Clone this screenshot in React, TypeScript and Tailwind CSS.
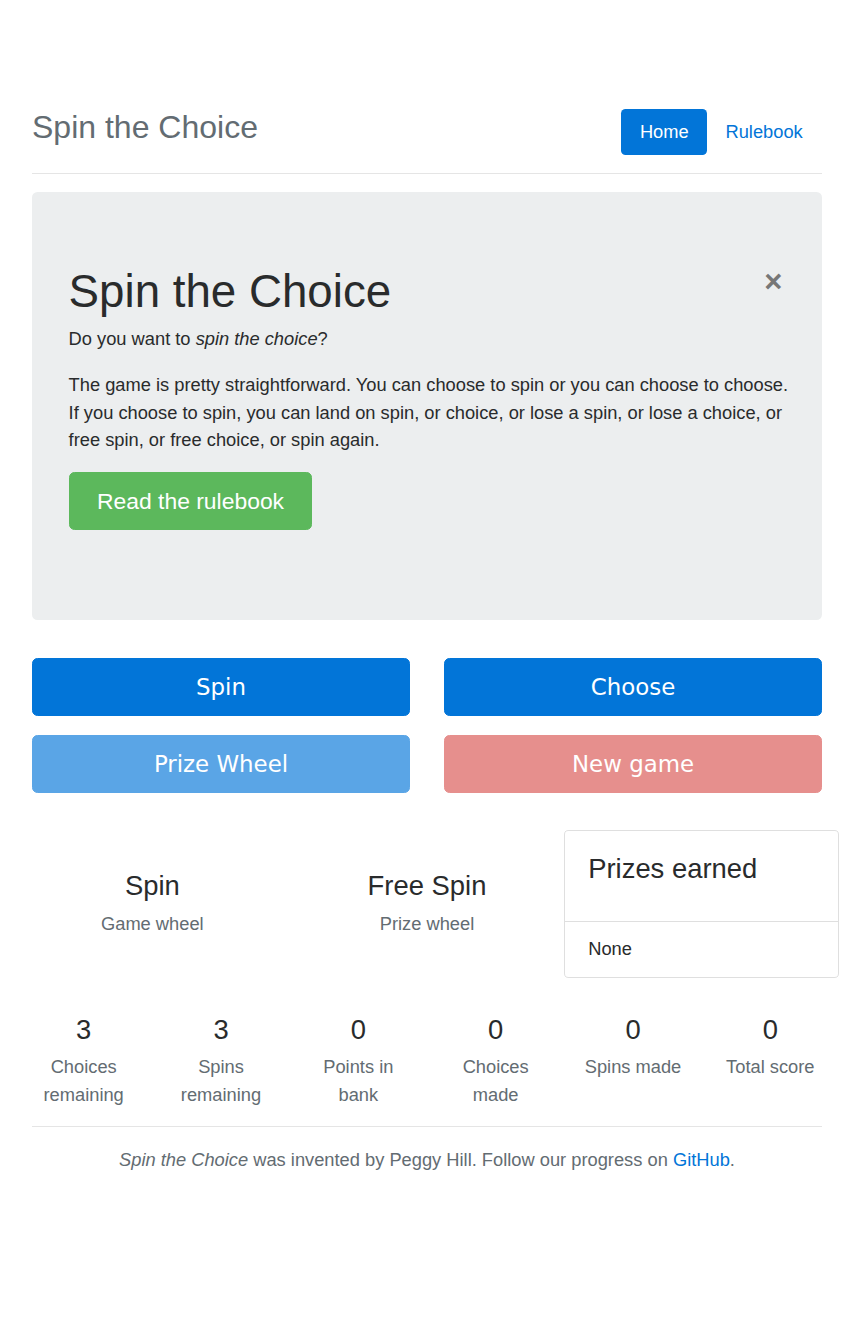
import React from 'react';

const muted = 'text-[#636c72]';

const stats = [
  { value: 3, label: 'Choices remaining' },
  { value: 3, label: 'Spins remaining' },
  { value: 0, label: 'Points in bank' },
  { value: 0, label: 'Choices made' },
  { value: 0, label: 'Spins made' },
  { value: 0, label: 'Total score' },
];

const ActionButton = ({ label, className }: { label: string; className: string }) => (
  <button
    className={`w-full h-[58px] rounded-[5.5px] border text-[22.9px] leading-[1.25] text-white font-['DejaVu_Sans',sans-serif] ${className}`}
  >
    {label}
  </button>
);

const App = () => {
  return (
    <div className="min-h-[1330px] bg-white font-['Liberation_Sans',Arial,sans-serif] text-[18.3px] leading-[1.5] text-[#292b2c]">
      <div className="ml-[32px] w-[790px] pt-[99.5px]">
        {/* header */}
        <header className="flex items-end justify-between pb-[18.3px] border-b border-[#e5e5e5]">
          <h3 className={`text-[32px] leading-[55px] ${muted}`}>Spin the Choice</h3>
          <nav className="flex mr-[1px]">
            <a className="h-[45.7px] px-[18.5px] flex items-center rounded-[4.6px] bg-[#0275d8] text-white">
              Home
            </a>
            <a className="h-[45.7px] px-[18.3px] flex items-center text-[#0275d8]">Rulebook</a>
          </nav>
        </header>

        {/* jumbotron */}
        <section className="mt-[18.3px] mb-[38px] rounded-[5.5px] bg-[#eceeef] px-[36.6px] pt-[75px] pb-[72px]">
          <button className="float-right mr-[3px] -mt-[1px] text-[31px] font-bold leading-none text-[#777]">×</button>
          <h1 className="text-[45.7px] leading-[1.1] mb-[8px]">Spin the Choice</h1>
          <p className="mb-[18.3px]">
            Do you want to <em>spin the choice</em>?
          </p>
          <p className="mb-[18.3px] -mr-[12px] leading-[27.5px]">
            The game is pretty straightforward. You can choose to spin or you can choose to choose.
            <br />
            If you choose to spin, you can land on spin, or choice, or lose a spin, or lose a choice, or
            <br />
            free spin, or free choice, or spin again.
          </p>
          <p className="mb-[18.3px]">
            <a className="inline-flex items-center h-[58px] px-[27.4px] rounded-[5.5px] border border-[#5cb85c] bg-[#5cb85c] text-white text-[22.9px] leading-[1.25]">
              Read the rulebook
            </a>
          </p>
        </section>

        {/* actions */}
        <div className="grid grid-cols-2 gap-x-[34px] gap-y-[19px]">
          <ActionButton label="Spin" className="bg-[#0275d8] border-[#0275d8]" />
          <ActionButton label="Choose" className="bg-[#0275d8] border-[#0275d8]" />
          <ActionButton label="Prize Wheel" className="bg-[#5aa5e6] border-[#5aa5e6]" />
          <ActionButton label="New game" className="bg-[#e68f8d] border-[#e68f8d]" />
        </div>

        {/* wheels + prizes */}
        <div className="-mx-[17px] w-[824px] mt-[37px] grid grid-cols-3">
          <div className="px-[17px] flex flex-col items-center justify-center">
            <h4 className="text-[27.4px] leading-[1.1] mb-[9.1px]">Spin</h4>
            <p className={muted}>Game wheel</p>
          </div>
          <div className="px-[17px] flex flex-col items-center justify-center">
            <h4 className="text-[27.4px] leading-[1.1] mb-[9.1px]">Free Spin</h4>
            <p className={muted}>Prize wheel</p>
          </div>
          <div className="border border-black/[0.125] rounded-[4.6px]">
            <div className="p-[22.9px]">
              <h4 className="text-[27.4px] leading-[1.1] mb-[13.7px]">Prizes earned</h4>
            </div>
            <div className="border-t border-black/[0.125] px-[22.9px] py-[13.7px]">None</div>
          </div>
        </div>

        {/* stats */}
        <div className="-mx-[17px] w-[824px] mt-[37px] grid grid-cols-6 text-center">
          {stats.map((s) => (
            <div key={s.label} className="px-[17px]">
              <h4 className="text-[27.4px] leading-[1.1] mb-[8.5px]">{s.value}</h4>
              <p className={muted}>{s.label}</p>
            </div>
          ))}
        </div>

        <hr className="mt-[18.3px] mb-[18.3px] border-t border-black/10" />

        <footer className={`text-center ${muted}`}>
          <em>Spin the Choice</em> was invented by Peggy Hill. Follow our progress on{' '}
          <a className="text-[#0275d8]">GitHub</a>.
        </footer>
      </div>
    </div>
  );
};

export default App;
